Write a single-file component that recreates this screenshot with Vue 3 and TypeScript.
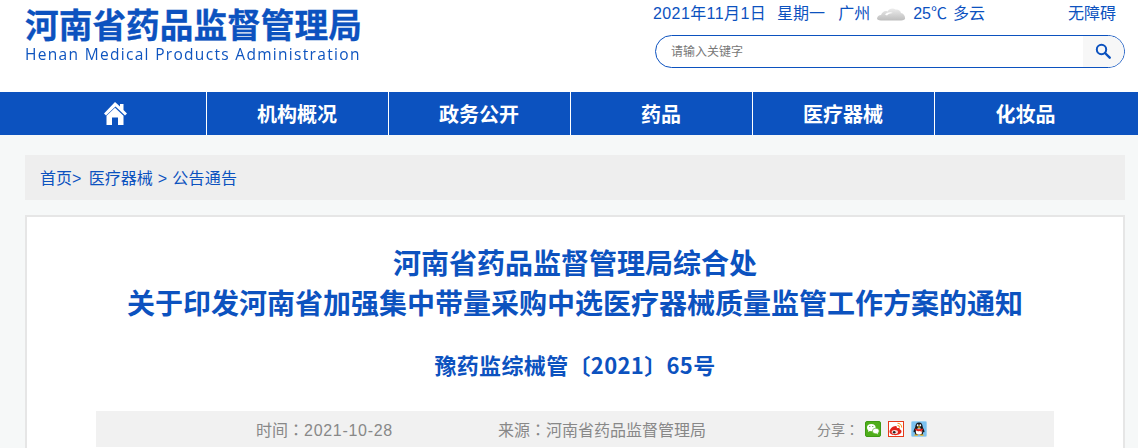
<template>
  <div class="page">
    <header class="header">
      <div class="logo">
        <div class="logo-cn">河南省药品监督管理局</div>
        <div class="logo-en">Henan Medical Products Administration</div>
      </div>
      <div class="tools">
        <div class="info">
          <span class="date">2021年11月1日</span>
          <span class="week">星期一</span>
          <span class="city">广州</span>
          <svg class="cloud" viewBox="0 0 30 16" width="30" height="16">
            <defs>
              <linearGradient id="cloudFill" x1="0" y1="0" x2="0" y2="1">
                <stop offset="0" stop-color="#ececec" />
                <stop offset="1" stop-color="#bdbdbd" />
              </linearGradient>
            </defs>
            <path
              d="M1 13c0-2.500 2-4 4-4 1-3 4-5 6.500-3.500C13 2.500 17 1.500 19.500 3.500c2.500-.5 5 1 5.500 3.500 2.500.5 4.500 3 4 6-1 1-3 1.500-6 1.500H7c-3 0-5-.5-6-1.500z"
              fill="url(#cloudFill)"
            />
            <path d="M9 8.500c2-2 5-3 8-1.500-3 0-5 1-6 2.500z" fill="#fff" />
          </svg>
          <span class="temp">25℃</span>
          <span class="weather">多云</span>
          <a class="access">无障碍</a>
        </div>
        <div class="search">
          <span class="placeholder">请输入关键字</span>
          <div class="search-btn">
            <svg viewBox="0 0 16 16" width="16" height="16">
              <circle cx="6.500" cy="6.500" r="4.700" fill="none" stroke="#0c52bf" stroke-width="2" />
              <path d="M10 10l4.700 4.700" stroke="#0c52bf" stroke-width="2.400" stroke-linecap="round" />
            </svg>
          </div>
        </div>
      </div>
    </header>

    <nav class="nav">
      <ul class="nav-list">
        <li class="nav-item">
          <svg class="home" viewBox="0 0 24 24" width="24" height="24">
            <path d="M12 0l5 4.500V2h3.500v6l3.500 3.500-2 2-9.500-9-9.500 9-2-2z" fill="#fff" />
            <path d="M12 5.800l8.500 8V23H15v-7.500H9V23H3.500v-9.200z" fill="#fff" />
          </svg>
        </li>
        <li v-for="item in navs" :key="item" class="nav-item">{{ item }}</li>
      </ul>
    </nav>

    <main class="main">
      <div class="crumb">
        <a>首页</a>&gt;
        <a class="crumb-first">医疗器械</a>
        <span class="crumb-arrow">&gt;</span>
        <a class="crumb-last">公告通告</a>
      </div>

      <article class="card">
        <h1 class="title">河南省药品监督管理局综合处<br />关于印发河南省加强集中带量采购中选医疗器械质量监管工作方案的通知</h1>
        <h2 class="doc-no">豫药监综械管〔2021〕65号</h2>
        <div class="meta">
          <span class="meta-time">时间<i class="colon">：</i><span class="nums">2021-10-28</span></span>
          <span class="meta-source">来源<i class="colon">：</i>河南省药品监督管理局</span>
          <span class="meta-share">分享<i class="colon">：</i></span>
          <div class="share-icons">
            <svg viewBox="0 0 16 16" width="16" height="16">
              <rect x="0.500" y="0.500" width="15" height="15" rx="1.500" fill="#4fae1a" stroke="#3f9a14" />
              <ellipse cx="6.300" cy="6.600" rx="4.300" ry="3.600" fill="#fff" />
              <path d="M3.500 9l-.5 2 2.200-1.200z" fill="#fff" />
              <ellipse cx="10.800" cy="10" rx="3.400" ry="2.800" fill="#fff" stroke="#4fae1a" stroke-width=".6" />
              <path d="M12.500 12l.8 1.500-2.200-1z" fill="#fff" />
              <circle cx="4.800" cy="5.500" r=".6" fill="#3f9a14" />
              <circle cx="7.800" cy="5.500" r=".6" fill="#3f9a14" />
            </svg>
            <svg viewBox="0 0 16 16" width="16" height="16">
              <rect x="0.500" y="0.500" width="15" height="15" fill="#fff" stroke="#e6391a" />
              <path d="M1.500 10.800C1.500 8 5 5 7.500 5c1.500 0 1.600 1.300 1.300 2.300 2-.7 3.500-.2 3 1.300 1.200.4 1.700 1 1.700 2 0 2-3 3.600-6 3.600s-6-1.200-6-3.400z" fill="#e2231a" />
              <ellipse cx="6.800" cy="11" rx="3.200" ry="2.100" fill="#f6dcd8" />
              <circle cx="6.200" cy="11.200" r="1.300" fill="#222" />
              <path d="M9.500 2.300a4.200 4.200 0 0 1 4.200 4.200M9.500 4.500a2 2 0 0 1 2 2" fill="none" stroke="#f7941e" stroke-width="1.100" />
            </svg>
            <svg viewBox="0 0 16 16" width="16" height="16">
              <rect x="0.500" y="0.500" width="15" height="15" rx="1" fill="#7cc0ee" stroke="#9fd2f2" />
              <path d="M8 1.500c2.500 0 3.700 2 3.700 4.300 0 1 1.300 2.500 1.700 4.200.2 1-.3 1.700-1.100 1L11.500 14h-7l-.8-3c-.8.700-1.300 0-1.100-1 .4-1.700 1.700-3.200 1.700-4.200C4.300 3.500 5.500 1.500 8 1.500z" fill="#17181c" />
              <ellipse cx="8" cy="10.500" rx="3.200" ry="3.300" fill="#fff" />
              <path d="M4.300 7.500c2.200 1 5.200 1 7.400 0l.3 1.600-1.500.6.300 2-1.500-1.600c-1 .2-2.200.2-3-.2L4 9z" fill="#e2231a" />
              <ellipse cx="6.700" cy="4.300" rx=".9" ry="1.100" fill="#fff" />
              <ellipse cx="9.300" cy="4.300" rx=".9" ry="1.100" fill="#fff" />
              <path d="M6.300 6l1.700-.7 1.700.7L8 7z" fill="#f5b81c" />
              <path d="M3.500 13.500h3.300v1.200H3.500zM9.200 13.500h3.300v1.200H9.200z" fill="#f5b81c" />
            </svg>
          </div>
        </div>
      </article>
    </main>
  </div>
</template>

<script setup lang="ts">
const navs: string[] = ['机构概况', '政务公开', '药品', '医疗器械', '化妆品']
</script>

<style scoped>
.page {
  height: 448px;
  overflow: hidden;
  color: #0c52bf;
  font-family: "Liberation Sans", "Noto Sans CJK SC", sans-serif;
}
.header {
  display: flex;
  justify-content: space-between;
  height: 92px;
  padding: 0 13px 0 25px;
  background: #fff;
}
.logo {
  padding-top: 5px;
}
.logo-cn {
  font-family: "Noto Sans CJK SC", sans-serif;
  font-size: 33.700px;
  font-weight: 700;
  line-height: 38px;
  -webkit-text-stroke: 0.3px #0c52bf;
}
.logo-en {
  margin-top: 1px;
  font-family: "Open Sans", sans-serif;
  font-size: 15.500px;
  line-height: 20px;
  letter-spacing: 1.310px;
  white-space: nowrap;
  opacity: 0.99;
}
.tools {
  width: 470px;
}
.info {
  display: flex;
  align-items: center;
  height: 24px;
  margin-top: 2px;
  font-size: 16px;
  line-height: 24px;
  white-space: nowrap;
}
.date {
  margin-left: -2px;
  letter-spacing: 0.400px;
}
.week {
  margin-left: 11px;
}
.city {
  margin-left: 13px;
}
.cloud {
  margin-left: 6px;
  filter: blur(0.5px);
}
.temp {
  margin-left: 7px;
}
.weather {
  margin-left: 6px;
}
.access {
  margin-left: 83px;
}
.search {
  display: flex;
  align-items: center;
  justify-content: space-between;
  box-sizing: border-box;
  height: 33px;
  margin-top: 9px;
  overflow: hidden;
  background: #fff;
  border: 1px solid #0c52bf;
  border-radius: 17px;
}
.placeholder {
  padding: 0 0 2px 15px;
  font-size: 12px;
  color: #777;
}
.search-btn {
  display: flex;
  align-items: center;
  justify-content: center;
  box-sizing: border-box;
  width: 41px;
  height: 100%;
  padding: 0 2px 2px 0;
  background: #f7f7f7;
}
.nav {
  height: 43px;
  background: #0c52bf;
}
.nav-list {
  display: flex;
  margin: 0;
  padding: 0 0 0 25px;
  list-style: none;
}
.nav-item {
  display: flex;
  align-items: center;
  justify-content: center;
  box-sizing: border-box;
  width: 182px;
  height: 43px;
  padding-right: 1px;
  font-family: "Noto Sans CJK SC", sans-serif;
  font-size: 20px;
  font-weight: 700;
  color: #fff;
  border-right: 1px solid #fff;
}
.nav-item:last-child {
  border-right: 0;
}
.home {
  margin-right: 1px;
}
.main {
  padding: 20px 13px 0 25px;
}
.crumb {
  height: 45px;
  padding-left: 15px;
  font-size: 16px;
  line-height: 48px;
  background: #eee;
}
.crumb-first {
  margin-left: 3px;
}
.crumb-arrow {
  margin-left: 5px;
}
.crumb-last {
  margin-left: 5px;
  letter-spacing: 0.300px;
}
.card {
  box-sizing: border-box;
  height: 260px;
  margin-top: 15px;
  padding: 25px 69px 0;
  background: #fff;
  border: 2px solid #e6e6e6;
  border-bottom: 0;
}
.title {
  margin: 0;
  font-family: "Noto Sans CJK SC", sans-serif;
  font-size: 28px;
  font-weight: 700;
  line-height: 40px;
  text-align: center;
  white-space: nowrap;
}
.doc-no {
  margin: 22px 0 0;
  font-family: "Noto Sans CJK SC", sans-serif;
  font-size: 22px;
  font-weight: 700;
  line-height: 40px;
  letter-spacing: 0.350px;
  text-align: center;
}
.meta {
  display: flex;
  align-items: center;
  height: 36px;
  margin-top: 27px;
  padding-left: 160px;
  font-size: 16px;
  color: #888;
  background: #f1f1f1;
}
.colon {
  font-family: "Noto Sans CJK TC", sans-serif;
  font-style: normal;
}
.nums {
  letter-spacing: 0.700px;
}
.meta-source {
  margin-left: 105px;
}
.meta-share {
  margin-left: 111px;
  font-size: 14px;
}
.share-icons {
  display: flex;
  gap: 7px;
  margin-left: 6px;
}
</style>

<style>
body {
  background: #f6f8f8;
}
</style>
